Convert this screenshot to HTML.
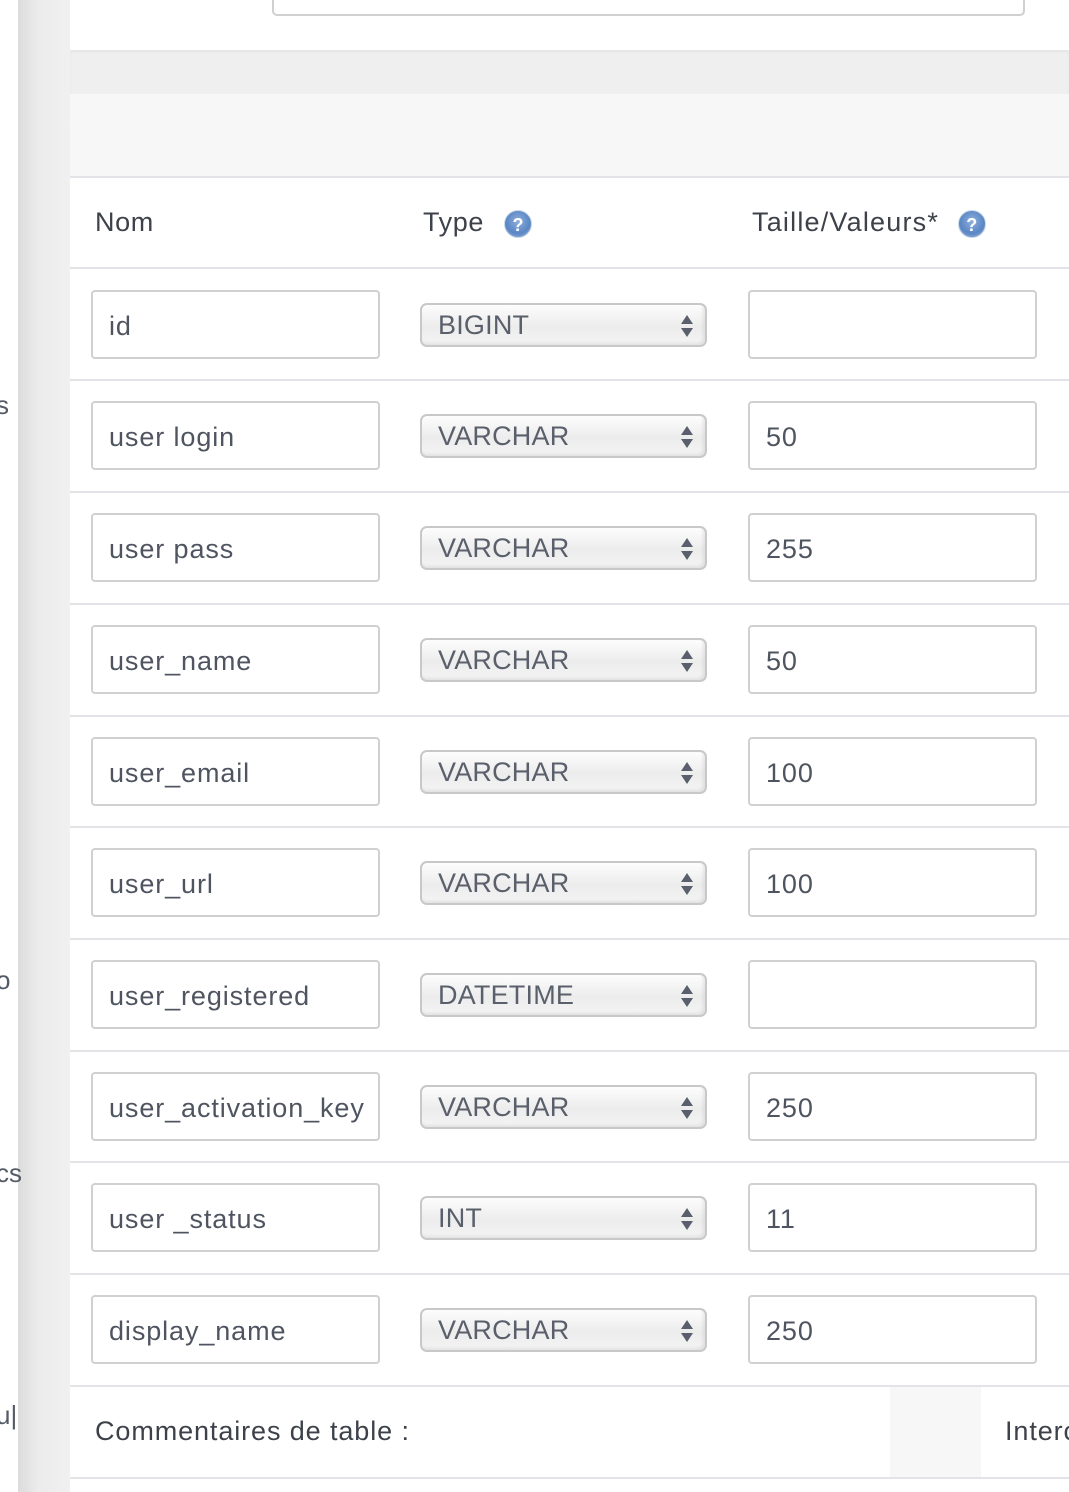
<!DOCTYPE html>
<html><head><meta charset="utf-8"><style>
*{box-sizing:border-box;margin:0;padding:0}
body{width:1069px;height:1492px;overflow:hidden;background:#fff;position:relative;font-family:"Liberation Sans",sans-serif;}
.abs{position:absolute}
.gut{left:18px;top:0;width:52px;height:1492px;background:linear-gradient(90deg,#dcdcdc,#ececec 40%,#f0f0f0)}
.gt{left:-4px;font-size:26px;color:#555b66;}
.inp{position:absolute;border:2px solid #d0d0d0;border-radius:4px;background:#fff;height:69px;font-size:27px;letter-spacing:0.9px;color:#4f5560;padding-left:16px;line-height:68px;overflow:hidden;white-space:nowrap}
.sel{position:absolute;left:420px;width:287px;height:44px;border:2px solid #c8c8c8;border-radius:7px;background:linear-gradient(#fdfdfd,#ececec 55%,#f4f4f4);box-shadow:inset -2px -2px 3px rgba(0,0,0,.08);font-size:27px;color:#5a606b;padding-left:16px;line-height:40px;letter-spacing:0.2px}
.arr{position:absolute;right:12px;top:8px;width:12px;height:26px}
.line{position:absolute;left:70px;right:0;height:2px;background:#e4e4e8}
.q{display:inline-block;width:28px;height:28px;border-radius:50%;background:radial-gradient(circle at 50% 40%,#8fb0dd,#5a86c4 60%,#a9c0e2);vertical-align:middle;color:#fff;font-size:18px;font-weight:bold;text-align:center;line-height:28px;border:1px solid #c8d6ea;letter-spacing:0}
.h{position:absolute;top:207px;font-size:27px;color:#3d424a;letter-spacing:0.6px}
</style></head><body>
<div class="abs gut"></div>
<div class="abs gt" style="top:390px">s</div>
<div class="abs gt" style="top:965px">o</div>
<div class="abs gt" style="top:1158px">cs</div>
<div class="abs gt" style="top:1400px">u|</div>
<div class="abs" style="left:272px;top:-10px;width:753px;height:26px;border:2px solid #d0d0d0;border-radius:5px"></div>
<div class="abs" style="left:70px;top:50px;right:0;height:44px;background:#efefef;box-shadow:inset 0 2px 2px #e6e6e6"></div>
<div class="abs" style="left:70px;top:94px;right:0;height:83px;background:#f7f7f7"></div>
<div class="line" style="top:176px"></div>
<div class="h" style="left:95px">Nom</div>
<div class="h" style="left:423px">Type <span class="q" style="margin-left:12px">?</span></div>
<div class="h" style="left:752px;letter-spacing:1.2px">Taille/Valeurs* <span class="q" style="margin-left:10px">?</span></div>
<div class="line" style="top:267px"></div>

<div class="inp" style="left:91px;top:290px;width:289px">id</div><div class="sel" style="top:303px">BIGINT<svg class="arr" viewBox="0 0 12 26"><path d="M6 2L12 11H0z M0 15H12L6 24z" fill="#5a606b"/></svg></div><div class="inp" style="left:748px;top:290px;width:289px"></div>
<div class="line" style="top:379px"></div>
<div class="inp" style="left:91px;top:401px;width:289px">user login</div><div class="sel" style="top:414px">VARCHAR<svg class="arr" viewBox="0 0 12 26"><path d="M6 2L12 11H0z M0 15H12L6 24z" fill="#5a606b"/></svg></div><div class="inp" style="left:748px;top:401px;width:289px">50</div>
<div class="line" style="top:491px"></div>
<div class="inp" style="left:91px;top:513px;width:289px">user pass</div><div class="sel" style="top:526px">VARCHAR<svg class="arr" viewBox="0 0 12 26"><path d="M6 2L12 11H0z M0 15H12L6 24z" fill="#5a606b"/></svg></div><div class="inp" style="left:748px;top:513px;width:289px">255</div>
<div class="line" style="top:603px"></div>
<div class="inp" style="left:91px;top:625px;width:289px">user_name</div><div class="sel" style="top:638px">VARCHAR<svg class="arr" viewBox="0 0 12 26"><path d="M6 2L12 11H0z M0 15H12L6 24z" fill="#5a606b"/></svg></div><div class="inp" style="left:748px;top:625px;width:289px">50</div>
<div class="line" style="top:715px"></div>
<div class="inp" style="left:91px;top:737px;width:289px">user_email</div><div class="sel" style="top:750px">VARCHAR<svg class="arr" viewBox="0 0 12 26"><path d="M6 2L12 11H0z M0 15H12L6 24z" fill="#5a606b"/></svg></div><div class="inp" style="left:748px;top:737px;width:289px">100</div>
<div class="line" style="top:826px"></div>
<div class="inp" style="left:91px;top:848px;width:289px">user_url</div><div class="sel" style="top:861px">VARCHAR<svg class="arr" viewBox="0 0 12 26"><path d="M6 2L12 11H0z M0 15H12L6 24z" fill="#5a606b"/></svg></div><div class="inp" style="left:748px;top:848px;width:289px">100</div>
<div class="line" style="top:938px"></div>
<div class="inp" style="left:91px;top:960px;width:289px">user_registered</div><div class="sel" style="top:973px">DATETIME<svg class="arr" viewBox="0 0 12 26"><path d="M6 2L12 11H0z M0 15H12L6 24z" fill="#5a606b"/></svg></div><div class="inp" style="left:748px;top:960px;width:289px"></div>
<div class="line" style="top:1050px"></div>
<div class="inp" style="left:91px;top:1072px;width:289px;padding-right:16px">user_activation_key</div><div class="sel" style="top:1085px">VARCHAR<svg class="arr" viewBox="0 0 12 26"><path d="M6 2L12 11H0z M0 15H12L6 24z" fill="#5a606b"/></svg></div><div class="inp" style="left:748px;top:1072px;width:289px">250</div>
<div class="line" style="top:1161px"></div>
<div class="inp" style="left:91px;top:1183px;width:289px">user _status</div><div class="sel" style="top:1196px">INT<svg class="arr" viewBox="0 0 12 26"><path d="M6 2L12 11H0z M0 15H12L6 24z" fill="#5a606b"/></svg></div><div class="inp" style="left:748px;top:1183px;width:289px">11</div>
<div class="line" style="top:1273px"></div>
<div class="inp" style="left:91px;top:1295px;width:289px">display_name</div><div class="sel" style="top:1308px">VARCHAR<svg class="arr" viewBox="0 0 12 26"><path d="M6 2L12 11H0z M0 15H12L6 24z" fill="#5a606b"/></svg></div><div class="inp" style="left:748px;top:1295px;width:289px">250</div>
<div class="line" style="top:1385px"></div>
<div class="abs" style="left:890px;top:1387px;width:91px;height:90px;background:#f7f7f8"></div>
<div class="abs" style="left:95px;top:1416px;font-size:27px;color:#3d424a;letter-spacing:0.9px">Commentaires de table :</div>
<div class="abs" style="left:1005px;top:1416px;width:64px;overflow:hidden;font-size:27px;color:#3d424a;white-space:nowrap;letter-spacing:0.9px">Interc</div>
<div class="line" style="top:1477px"></div>
</body></html>
